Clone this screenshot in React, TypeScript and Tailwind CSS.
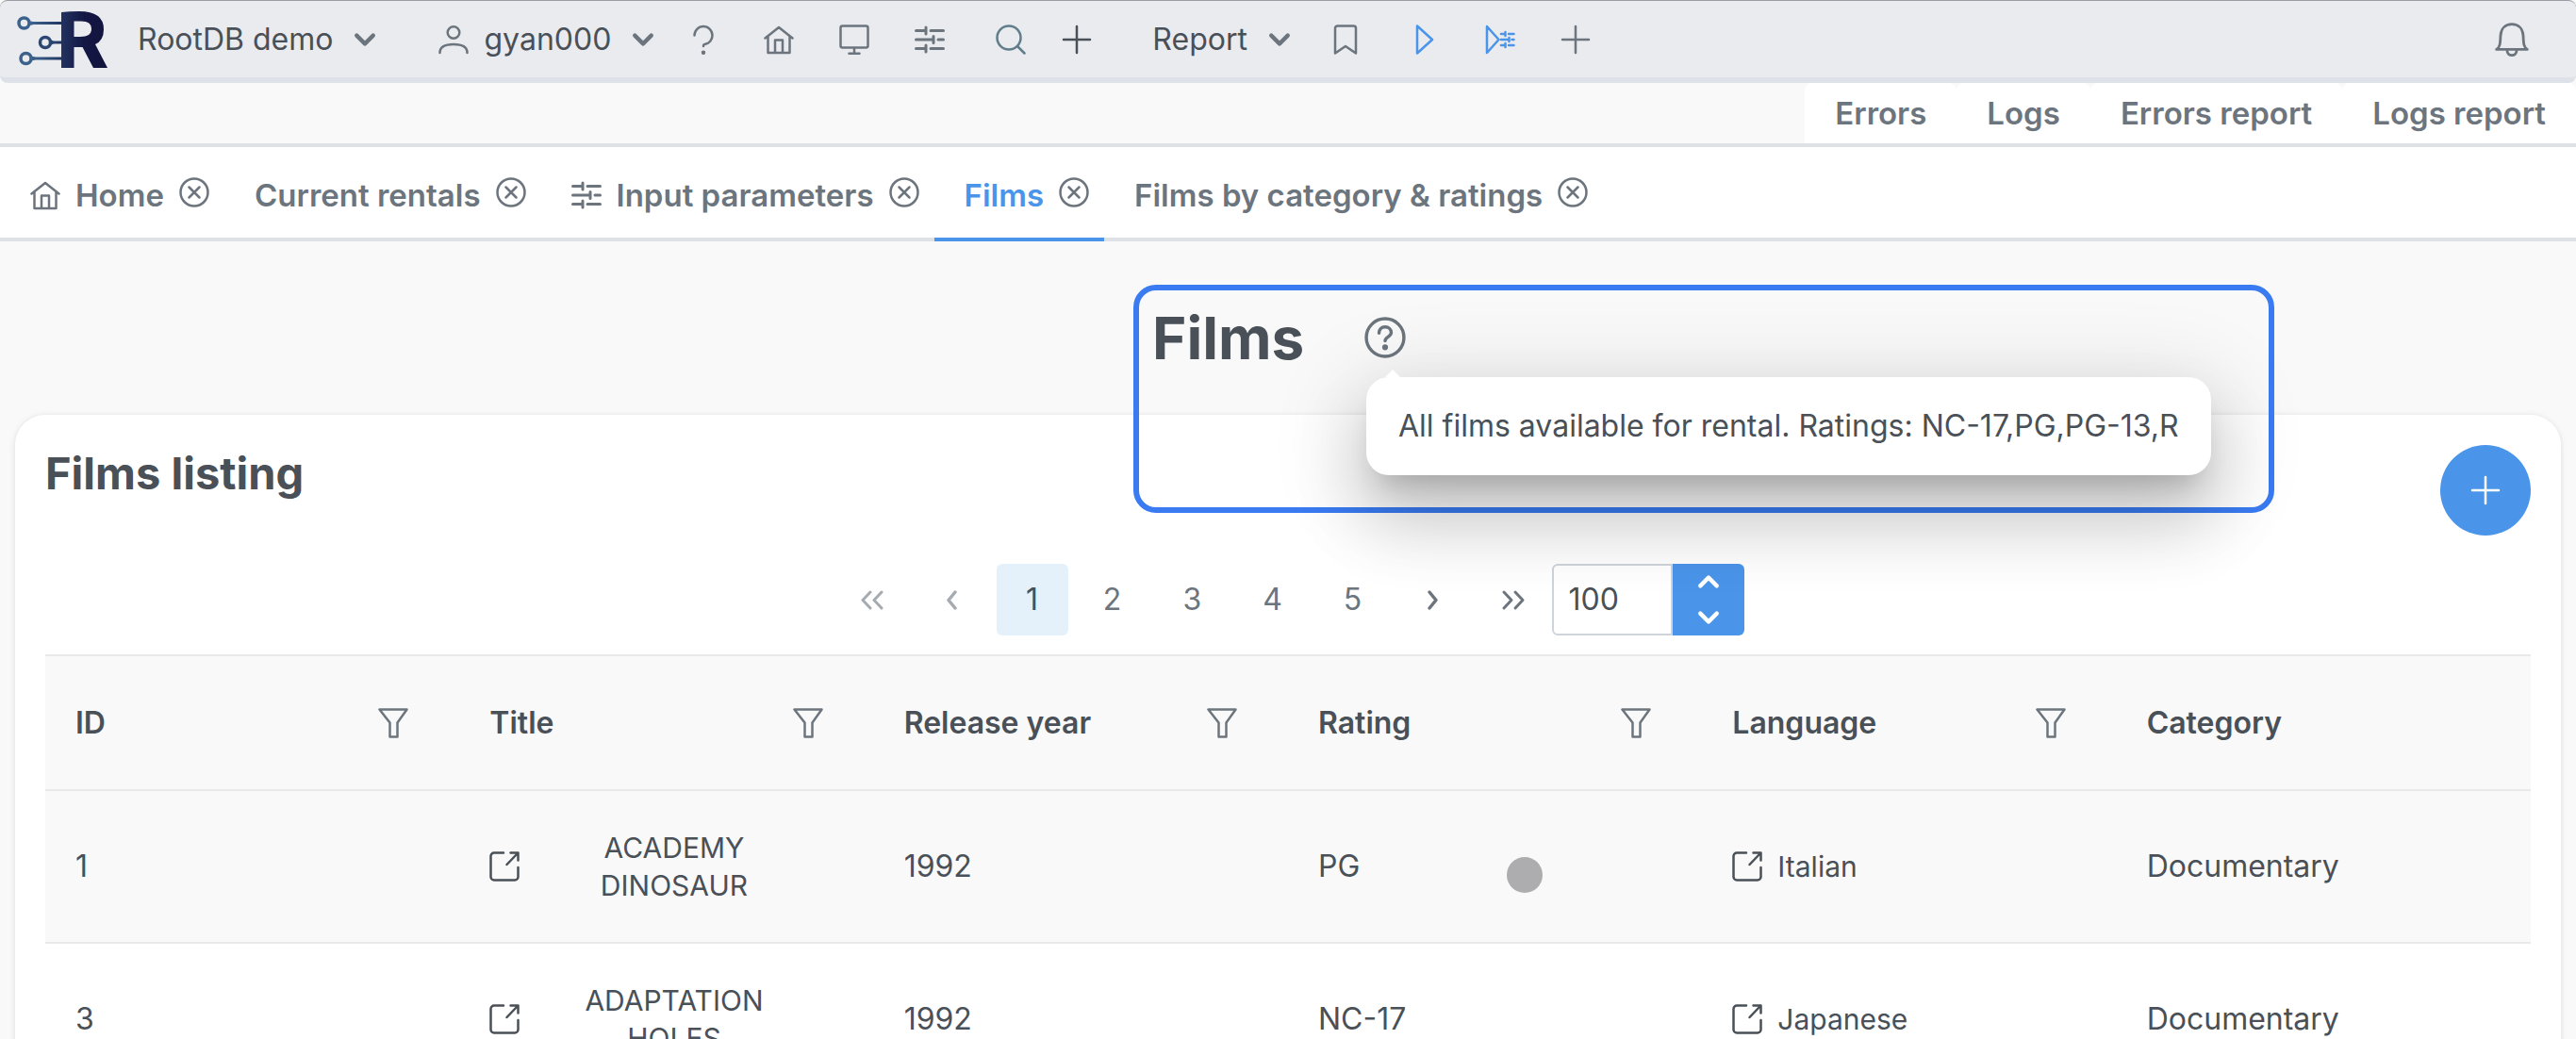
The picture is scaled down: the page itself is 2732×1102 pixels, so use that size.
import React from "react";

type IconProps = { className?: string; w?: number };

const Svg = ({ className = "size-8", children, w = 2.5 }: IconProps & { children: React.ReactNode }) => (
  <svg viewBox="0 0 32 32" className={`shrink-0 ${className}`} fill="none" stroke="currentColor" strokeWidth={w} strokeLinecap="round" strokeLinejoin="round" aria-hidden="true">
    {children}
  </svg>
);

const Home = (p: IconProps) => (
  <Svg {...p}>
    <path d="M1.500 14.500 16 3l14.500 11.500M4.500 12.500V30h23V12.500M12 30V16.500h8V30" />
  </Svg>
);
const User = (p: IconProps) => (
  <Svg {...p}>
    <circle cx="16" cy="8.500" r="6.300" />
    <path d="M1.500 30c0-6 4.500-9 14.500-9s14.500 3 14.500 9" />
  </Svg>
);
const Question = (p: IconProps) => (
  <Svg {...p}>
    <path d="M6.500 11.500a9.500 9.500 0 0 1 19 0c0 5-3.500 8.500-7.500 9.200q-2 .3-2 2.300" />
    <circle cx="16" cy="29.800" r="1" fill="currentColor" />
  </Svg>
);
const Desktop = (p: IconProps) => (
  <Svg {...p}>
    <rect x="1.500" y="1.500" width="29" height="23" rx="2" />
    <path d="M16 25v5.500M10.500 30.700h11" />
  </Svg>
);
const Sliders = (p: IconProps) => (
  <Svg w={3} {...p}>
    <path d="M1.500 6.500h10M17 6.500h13.500M12 3v7M1.500 16h18M25 16h5.500M20 12.500v7M1.500 25.500h10M17 25.500h13.500M12 22v7" />
  </Svg>
);
const Search = (p: IconProps) => (
  <Svg {...p}>
    <circle cx="14" cy="14" r="12.500" />
    <path d="m23 23 7.500 7.500" />
  </Svg>
);
const Plus = (p: IconProps) => (
  <Svg {...p}>
    <path d="M16 2v28M2 16h28" />
  </Svg>
);
const Bookmark = (p: IconProps) => (
  <Svg {...p}>
    <path d="M5 30.500V4a2.500 2.500 0 0 1 2.500-2.500h17A2.500 2.500 0 0 1 27 4v26.500L16 23z" />
  </Svg>
);
const Play = (p: IconProps) => (
  <Svg {...p}>
    <path d="M8 1.500 24 16 8 30.500z" />
  </Svg>
);
const PlaySliders = (p: IconProps) => (
  <Svg {...p}>
    <path d="M2 2 14.500 16 2 30zM17 10h4M25 10h5.500M21.500 8v4M17 16h8M28.500 16h2M25.500 14v4M17 22h4M25 22h5.500M21.500 20v4" />
  </Svg>
);
const Bell = (p: IconProps) => (
  <Svg {...p}>
    <path d="M1.500 25.300h29c-3.500-2.300-3.500-5.800-3.800-12.800C26.300 5.500 22 1.500 16 1.500S5.700 5.500 5.300 12.500c-.3 7-.3 10.500-3.800 12.800zM11.500 26c0 3 2 4.800 4.500 4.800s4.500-1.800 4.500-4.800" />
  </Svg>
);
const Close = (p: IconProps) => (
  <Svg {...p}>
    <circle cx="16" cy="16" r="14.500" />
    <path d="m10.500 10.500 11 11M21.500 10.500l-11 11" />
  </Svg>
);
const Help = (p: IconProps) => (
  <Svg {...p}>
    <circle cx="16" cy="16" r="14.500" />
    <path d="M11.300 12.500c0-3 2-4.700 4.700-4.700s4.700 1.900 4.700 4.400c0 3.300-4.700 3.300-4.700 6.300" />
    <circle cx="16" cy="23.500" r="1" fill="currentColor" />
  </Svg>
);
const Filter = (p: IconProps) => (
  <Svg {...p}>
    <path d="M1.500 1.500h29L20.500 15.500v15h-8v-15z" />
  </Svg>
);
const External = (p: IconProps) => (
  <Svg {...p}>
    <path d="M15 1.500H5A3.500 3.500 0 0 0 1.500 5v22A3.500 3.500 0 0 0 5 30.500h22a3.500 3.500 0 0 0 3.500-3.500V17M22.500 1.500h8v8M30 2 18.500 14" />
  </Svg>
);
const ChevronDown = (p: IconProps) => (
  <Svg w={5} {...p}>
    <path d="m6 11 10 10 10-10" />
  </Svg>
);
const ChevronUp = (p: IconProps) => (
  <Svg w={5} {...p}>
    <path d="m6 21 10-10 10 10" />
  </Svg>
);
const AngleLeft = (p: IconProps) => (
  <Svg w={3.5} {...p}>
    <path d="m19 8-7 8.500 7 8.500" />
  </Svg>
);
const AngleRight = (p: IconProps) => (
  <Svg w={3.5} {...p}>
    <path d="m12 8 7 8.500-7 8.500" />
  </Svg>
);
const DoubleLeft = (p: IconProps) => (
  <Svg w={3} {...p}>
    <path d="m14 8-8 8.500L14 25M26 8l-8 8.500 8 8.500" />
  </Svg>
);
const DoubleRight = (p: IconProps) => (
  <Svg w={3} {...p}>
    <path d="m6 8 8 8.500L6 25M18 8l8 8.500-8 8.500" />
  </Svg>
);

const Logo = () => (
  <svg viewBox="0 0 98 64" className="h-16 w-[98px] shrink-0" fill="none" role="img" aria-label="RootDB">
    <defs>
      <linearGradient id="wire" x1="0" x2="1" y1="0" y2="0">
        <stop offset="0" stopColor="#3f6690" />
        <stop offset="1" stopColor="#20335f" />
      </linearGradient>
      <linearGradient id="letter" x1="0" x2="1" y1="0" y2="0">
        <stop offset="0" stopColor="#22325f" />
        <stop offset=".5" stopColor="#141744" />
        <stop offset="1" stopColor="#12143d" />
      </linearGradient>
    </defs>
    <g stroke="#3b618c" strokeWidth="3.500">
      <circle cx="9.500" cy="14.500" r="5.500" />
      <circle cx="32" cy="35" r="5.500" stroke="#2c4774" />
      <circle cx="11.500" cy="52" r="5.500" />
    </g>
    <path d="M15 12.500l5 .5h31v3H20l-5 1zM37 32l4 1.500h10v3H41L37 38zM17 49.500l5 1h29v3H22l-5 1z" fill="url(#wire)" />
    <path fillRule="evenodd" d="M49 3Q57 2 68 2 94 2 94 21q0 12-9 16L98 62H83L71.500 40H62.500V62H49zM62.500 12.500V29H69q12 0 12-8.500T69 12.500z" fill="url(#letter)" />
  </svg>
);

const iconButton = "flex size-12 items-center justify-center";
const pageButton = "flex h-[76px] w-[76px] items-center justify-center";

const Tab = ({ icon, label, active }: { icon?: React.ReactNode; label: string; active?: boolean }) => (
  <div className={`-mb-1 flex items-center gap-4 border-b-4 pr-4 pl-8 ${active ? "border-[#4a95ea] text-[#4a95ea]" : "border-transparent"}`}>
    <button className="flex items-center gap-4 pt-1.5 font-semibold">
      {icon}
      {label}
    </button>
    <button aria-label={`Close ${label}`} className="text-[#6c757d]">
      <Close />
    </button>
  </div>
);

const columns = ["ID", "Title", "Release year", "Rating", "Language", "Category"];
const films = [
  { id: 1, title: ["ACADEMY", "DINOSAUR"], year: 1992, rating: "PG", language: "Italian", category: "Documentary" },
  { id: 3, title: ["ADAPTATION", "HOLES"], year: 1992, rating: "NC-17", language: "Japanese", category: "Documentary" },
];

export default function App() {
  return (
    <div className="h-screen overflow-hidden bg-[#f9f9f9] font-['Inter',sans-serif] text-[32px] leading-10 text-[#495057]">
      <header className="flex h-[88px] items-center rounded-lg border-t border-b-6 border-t-[#9a9ba3] border-b-[#dee2e8] bg-[#e9ebef] pr-[50px] pl-4 text-[#6c757d]">
        <Logo />
        <button className="ml-8 flex items-center gap-5 text-[#495057]">
          RootDB demo
          <ChevronDown className="size-7 text-[#6c757d]" />
        </button>
        <button className="ml-16 flex items-center gap-4 text-[#495057]">
          <User className="size-8 text-[#6c757d]" />
          gyan000
          <ChevronDown className="ml-1 size-7 text-[#6c757d]" />
        </button>
        <nav aria-label="Tools" className="ml-[26px] flex items-center gap-8">
          <button aria-label="Help" className={iconButton}><Question /></button>
          <button aria-label="Home" className={iconButton}><Home /></button>
          <button aria-label="Screens" className={iconButton}><Desktop /></button>
          <button aria-label="Parameters" className={iconButton}><Sliders /></button>
          <button aria-label="Search" className={`${iconButton} ml-1.5 text-[#607d8b]`}><Search /></button>
          <button aria-label="Add" className={`${iconButton} -ml-2.5 text-[#495057]`}><Plus /></button>
        </nav>
        <button className="ml-14 flex items-center gap-5 text-[#495057]">
          Report
          <ChevronDown className="size-7 text-[#6c757d]" />
        </button>
        <nav aria-label="Report tools" className="ml-8 flex items-center gap-8">
          <button aria-label="Bookmark" className={iconButton}><Bookmark /></button>
          <button aria-label="Run" className={`${iconButton} ml-1 text-[#4a95ea]`}><Play /></button>
          <button aria-label="Run with parameters" className={`${iconButton} text-[#4a95ea]`}><PlaySliders /></button>
          <button aria-label="New report" className={iconButton}><Plus /></button>
        </nav>
        <button aria-label="Notifications" className="ml-auto flex items-center"><Bell className="size-9" /></button>
      </header>

      <nav aria-label="Logs" className="flex h-[68px] justify-end border-b-4 border-[#dee2e6] text-[33px] font-semibold text-[#6c757d]">
        {["Errors", "Logs", "Errors report", "Logs report"].map((label) => (
          <button key={label} className="rounded-t-lg bg-white px-8">{label}</button>
        ))}
      </nav>

      <nav aria-label="Open tabs" className="flex h-[100px] border-b-4 border-[#dee2e6] bg-white text-[33px] text-[#6c757d]">
        <Tab icon={<Home />} label="Home" />
        <Tab label="Current rentals" />
        <Tab icon={<Sliders />} label="Input parameters" />
        <Tab label="Films" active />
        <Tab label="Films by category & ratings" />
      </nav>

      <main className="px-4 pt-[46px]">
        <div className="flex h-[138px] pl-[44%]">
          <div className="relative z-10 -ml-0.5 flex h-[242px] w-[1210px] shrink-0 items-start rounded-3xl border-6 border-[#3a7bf2] px-3.5 pt-5">
            <h1 className="text-[62px] leading-[62px] font-bold">Films</h1>
            <button aria-label="About this report" className="ml-16 pt-2 text-[#6c757d]"><Help className="size-11" /></button>
            <div role="tooltip" className="absolute top-[92px] left-[241px] rounded-3xl bg-white px-[34px] py-8 whitespace-nowrap shadow-[0_22px_30px_-14px_rgba(0,0,0,0.2),0_48px_76px_6px_rgba(0,0,0,0.14),0_18px_92px_16px_rgba(0,0,0,0.12)]">
              <span className="absolute -top-2 left-5 border-x-8 border-b-8 border-x-transparent border-b-white" />
              All films available for rental. Ratings: NC-17,PG,PG-13,R
            </div>
          </div>
        </div>

        <section className="rounded-4xl bg-white px-8 pt-8 shadow-[0_1px_6px_rgba(0,0,0,0.12)]">
          <div className="flex h-[126px] items-start justify-between">
            <h2 className="pt-1.5 text-[47px] leading-[48px] font-bold">Films listing</h2>
            <button aria-label="Add film" className="flex size-24 items-center justify-center rounded-full bg-[#4a95ea] text-white"><Plus /></button>
          </div>

          <div className="flex h-24 items-start justify-center gap-[9px] pl-1 text-[#6c757d]">
            <button aria-label="First page" disabled className={`${pageButton} opacity-60`}><DoubleLeft /></button>
            <button aria-label="Previous page" disabled className={`${pageButton} opacity-60`}><AngleLeft /></button>
            {[1, 2, 3, 4, 5].map((n) => (
              <button key={n} className={`${pageButton} rounded-md ${n === 1 ? "bg-[#e4f1fb] text-[#495057]" : ""}`}>{n}</button>
            ))}
            <button aria-label="Next page" className={pageButton}><AngleRight /></button>
            <button aria-label="Last page" className={pageButton}><DoubleRight /></button>
            <div className="-ml-1.5 flex h-[76px]">
              <input aria-label="Rows per page" defaultValue="100" className="w-32 rounded-l-md border-2 border-[#ced4da] bg-transparent px-4 text-[#495057]" />
              <div className="flex w-[76px] flex-col rounded-r-md bg-[#4a95ea] text-white">
                <button aria-label="More rows" className="flex flex-1 items-center justify-center"><ChevronUp className="size-7" /></button>
                <button aria-label="Fewer rows" className="flex flex-1 items-center justify-center"><ChevronDown className="size-7" /></button>
              </div>
            </div>
          </div>

          <table className="w-full table-fixed border-collapse text-left">
            <thead>
              <tr className="h-[143px] border-y-2 border-[#e9e9ea] bg-[#f9f9f9]">
                {columns.map((name) => (
                  <th key={name} className="px-8 font-semibold">
                    <div className="flex items-center justify-between">
                      {name}
                      {name !== "Category" && (
                        <button aria-label={`Filter ${name}`} className="mr-[22px] text-[#6c757d]"><Filter /></button>
                      )}
                    </div>
                  </th>
                ))}
              </tr>
            </thead>
            <tbody>
              {films.map((film) => (
                <tr key={film.id} className="h-[162px] border-b-2 border-[#e9e9ec] odd:bg-[#f9f9f9]">
                  <td className="px-8">{film.id}</td>
                  <td className="px-8">
                    <a href="#film" className="flex items-center pr-4 text-[30px]">
                      <External />
                      <span className="flex-1 text-center">{film.title[0]}<br />{film.title[1]}</span>
                    </a>
                  </td>
                  <td className="px-8">{film.year}</td>
                  <td className="relative px-8">
                    {film.rating}
                    {film.id === 1 && <span className="absolute top-[70px] left-[232px] size-[38px] rounded-full bg-[#adadaf]" />}
                  </td>
                  <td className="px-8">
                    <a href="#language" className="flex items-center gap-4 text-[30px]"><External />{film.language}</a>
                  </td>
                  <td className="px-8">{film.category}</td>
                </tr>
              ))}
            </tbody>
          </table>
        </section>
      </main>
    </div>
  );
}
